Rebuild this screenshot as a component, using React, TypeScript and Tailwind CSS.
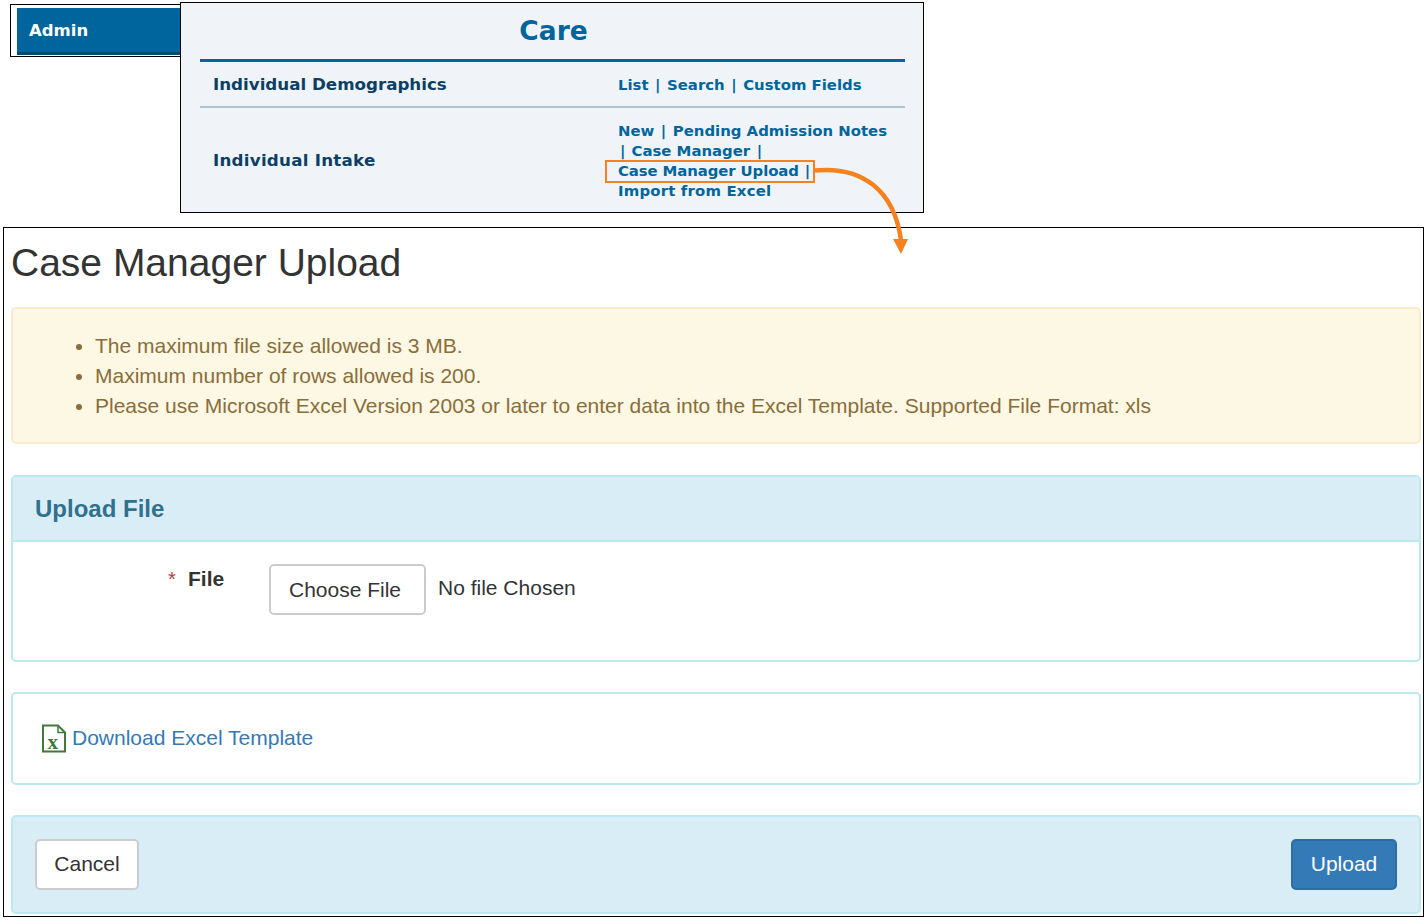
import React from 'react';

const verdana = "font-['DejaVu_Sans',sans-serif]";

const Sep = () => <span className="mx-[6.5px]">|</span>;

const ExcelIcon = () => (
  <svg width="26" height="29" viewBox="0 0 26 29" fill="none" className="shrink-0">
    <path d="M2 1.5H17L24 8.5V27.5H2Z" fill="#fff" stroke="#3f7a3a" strokeWidth="2" />
    <path d="M17 1.5V8.5H24" fill="none" stroke="#3f7a3a" strokeWidth="1.5" />
    <text x="6.5" y="25" fontFamily="'Liberation Serif',serif" fontWeight="700" fontSize="21" fill="#3f7a3a">x</text>
  </svg>
);

const Arrow = () => (
  <svg width="120" height="100" viewBox="0 0 120 100" fill="none" className="absolute left-[810px] top-[160px] z-20">
    <path d="M5 10.5C52 6 84 30 91 80" stroke="#f58220" strokeWidth="4.5" fill="none" />
    <path d="M83 79H98L91 94Z" fill="#f58220" />
  </svg>
);

const CareMenu = () => (
  <div className="relative z-10 ml-[-2px] mt-[2px] h-[211px] w-[744px] border border-black bg-[#f0f4f8] pr-[18px] pl-[19px]">
    <div className={`${verdana} flex h-[56px] items-center justify-center pl-[2px] text-[26.5px] leading-none font-bold text-[#00659c]`}>Care</div>
    <div className="h-[3px] bg-[#00659c]" />
    <div className="flex h-[46px] items-center border-b-2 border-[#b0c4d2] pt-[2px] pl-[13px]">
      <div className={`${verdana} w-[405px] text-[16.7px] font-bold text-[#0b3f66]`}>Individual Demographics</div>
      <div className={`${verdana} text-[14.9px] font-bold text-[#00659c]`}>List<Sep />Search<Sep />Custom Fields</div>
    </div>
    <div className="flex h-[105px] items-center pl-[13px]">
      <div className={`${verdana} w-[405px] text-[16.7px] font-bold tracking-[0.25px] text-[#0b3f66]`}>Individual Intake</div>
      <div className={`${verdana} w-[280px] text-[14.9px] leading-[20px] font-bold whitespace-nowrap text-[#00659c]`}>
        <div>New<Sep />Pending Admission Notes</div>
        <div><span className="ml-[2px]">|</span><span className="ml-[6px]">Case Manager</span><Sep /></div>
        <div className="relative">
          <span className="tracking-[-0.1px]">Case Manager Upload</span><span className="ml-[6px]">|</span>
          <span className="absolute left-[-13px] top-[-1px] h-[23px] w-[210px] border-2 border-[#f58220]" />
        </div>
        <div className="tracking-[0.18px]">Import from Excel</div>
      </div>
    </div>
  </div>
);

export default function App() {
  return (
    <div className="relative h-[920px] w-[1426px] overflow-hidden bg-white font-['Liberation_Sans',sans-serif] text-[#333]">
      <div className="flex h-[227px] items-start pl-[10px]">
        <div className="mt-[4px] h-[53px] w-[172px] border border-black pl-[6px] pt-[3px]">
          <div className={`${verdana} flex h-[47px] items-center border-b-[3px] border-[#004b70] bg-[#00659c] pt-[2px] pl-[12px] text-[16.5px] font-bold text-white`}>
            Admin
          </div>
        </div>
        <CareMenu />
      </div>

      <Arrow />

      <div className="mx-[3px] h-[690px] w-[1421px] border border-black pr-[2px] pl-[7px]">
        <h1 className="flex h-[69px] items-center text-[39px] leading-none font-normal">Case Manager Upload</h1>

        <div className="mt-[10px] flex h-[137px] items-center rounded-[5px] border-2 border-[#faebcc] bg-[#fcf8e3] pl-[82px] text-[21px] leading-[30px] text-[#8a6d3b]">
          <ul className="list-disc">
            <li>The maximum file size allowed is 3 MB.</li>
            <li>Maximum number of rows allowed is 200.</li>
            <li>Please use Microsoft Excel Version 2003 or later to enter data into the Excel Template. Supported File Format: xls</li>
          </ul>
        </div>

        <div className="mt-[31px] h-[187px] overflow-hidden rounded-[5px] border-2 border-[#bce8f1]">
          <div className="flex h-[65px] items-center border-b-2 border-[#bce8f1] bg-[#d9edf7] pl-[22px] text-[24px] font-bold text-[#31708f]">
            Upload File
          </div>
          <div className="flex items-start pt-[22px] pl-[155px]">
            <span className="mt-[1px] w-[20px] text-[20px] leading-[28px] text-[#a94442]">*</span>
            <span className="mt-[1px] w-[81px] text-[21px] leading-[28px] font-bold">File</span>
            <button className="h-[51px] w-[157px] rounded-[5px] border-2 border-[#ccc] bg-white pr-[5px] text-[21px]">Choose File</button>
            <span className="ml-[12px] text-[21px] leading-[48px]">No file Chosen</span>
          </div>
        </div>

        <div className="mt-[30px] flex h-[93px] items-center gap-[5px] rounded-[5px] border-2 border-[#bce8f1] pl-[28px]">
          <ExcelIcon />
          <a className="mt-[-2px] text-[21px] text-[#337ab7]">Download Excel Template</a>
        </div>

        <div className="mt-[30px] flex h-[99px] items-center justify-between rounded-[5px] border-2 border-[#bce8f1] bg-[#d9edf7] px-[22px]">
          <button className="h-[51px] w-[104px] rounded-[5px] border-2 border-[#ccc] bg-white pb-[2px] text-[21px]">Cancel</button>
          <button className="h-[51px] w-[106px] rounded-[5px] border-2 border-[#2e6da4] bg-[#337ab7] pb-[2px] text-[21px] text-white">Upload</button>
        </div>
      </div>
    </div>
  );
}
